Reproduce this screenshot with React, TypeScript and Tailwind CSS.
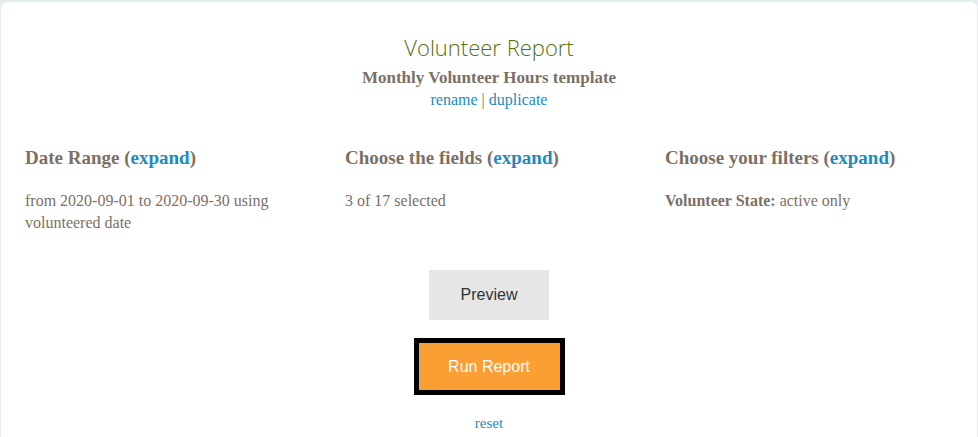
export default function App() {
  const serif = { fontFamily: '"Liberation Serif", Georgia, serif' };
  return (
    <div className="min-h-[437px] bg-[#e4edef] pt-[2px] px-[1px]">
      <div
        className="min-h-[435px] rounded-t-[6px] bg-white text-[#7b7065]"
        style={serif}
      >
        {/* Header */}
        <div className="flex flex-col items-center pt-[31px]">
          <h1
            className="text-[22px] font-light leading-[28px] text-[#58700f]"
            style={{ fontFamily: '"Open Sans", sans-serif' }}
          >
            Volunteer Report
          </h1>
          <div className="mt-[7px] text-[17px] font-bold leading-[20px]">
            Monthly Volunteer Hours template
          </div>
          <div className="mt-[2px] text-[16px] leading-[20px]">
            <a className="text-[#1b8cc0]">rename</a> |{" "}
            <a className="text-[#1b8cc0]">duplicate</a>
          </div>
        </div>

        {/* Report sections */}
        <div className="mt-[36px] grid grid-cols-[320px_320px_1fr] pl-[24px]">
          <div className="pr-[40px]">
            <h2 className="text-[19px] font-bold leading-[24px]">
              Date Range (<a className="text-[#1b8cc0]">expand</a>)
            </h2>
            <p className="mt-[20px] text-[16px] leading-[22px]">
              from 2020-09-01 to 2020-09-30 using volunteered date
            </p>
          </div>
          <div>
            <h2 className="text-[19px] font-bold leading-[24px]">
              Choose the fields (<a className="text-[#1b8cc0]">expand</a>)
            </h2>
            <p className="mt-[20px] text-[16px] leading-[22px]">3 of 17 selected</p>
          </div>
          <div>
            <h2 className="text-[19px] font-bold leading-[24px]">
              Choose your filters (<a className="text-[#1b8cc0]">expand</a>)
            </h2>
            <p className="mt-[20px] text-[16px] leading-[22px]">
              <b>Volunteer State:</b> active only
            </p>
          </div>
        </div>

        {/* Actions */}
        <div
          className="mt-[36px] flex flex-col items-center"
          style={{ fontFamily: '"Liberation Sans", Arial, sans-serif' }}
        >
          <button className="h-[50px] w-[120px] bg-[#e6e6e6] text-[16px] text-[#333333]">
            Preview
          </button>
          <button className="mt-[18px] h-[57px] w-[151px] border-[5px] border-black bg-[#f99f33] text-[16px] text-white">
            Run Report
          </button>
          <a
            className="mt-[18px] text-[15px] leading-[20px] text-[#1b8cc0]"
            style={serif}
          >
            reset
          </a>
        </div>
      </div>
    </div>
  );
}
